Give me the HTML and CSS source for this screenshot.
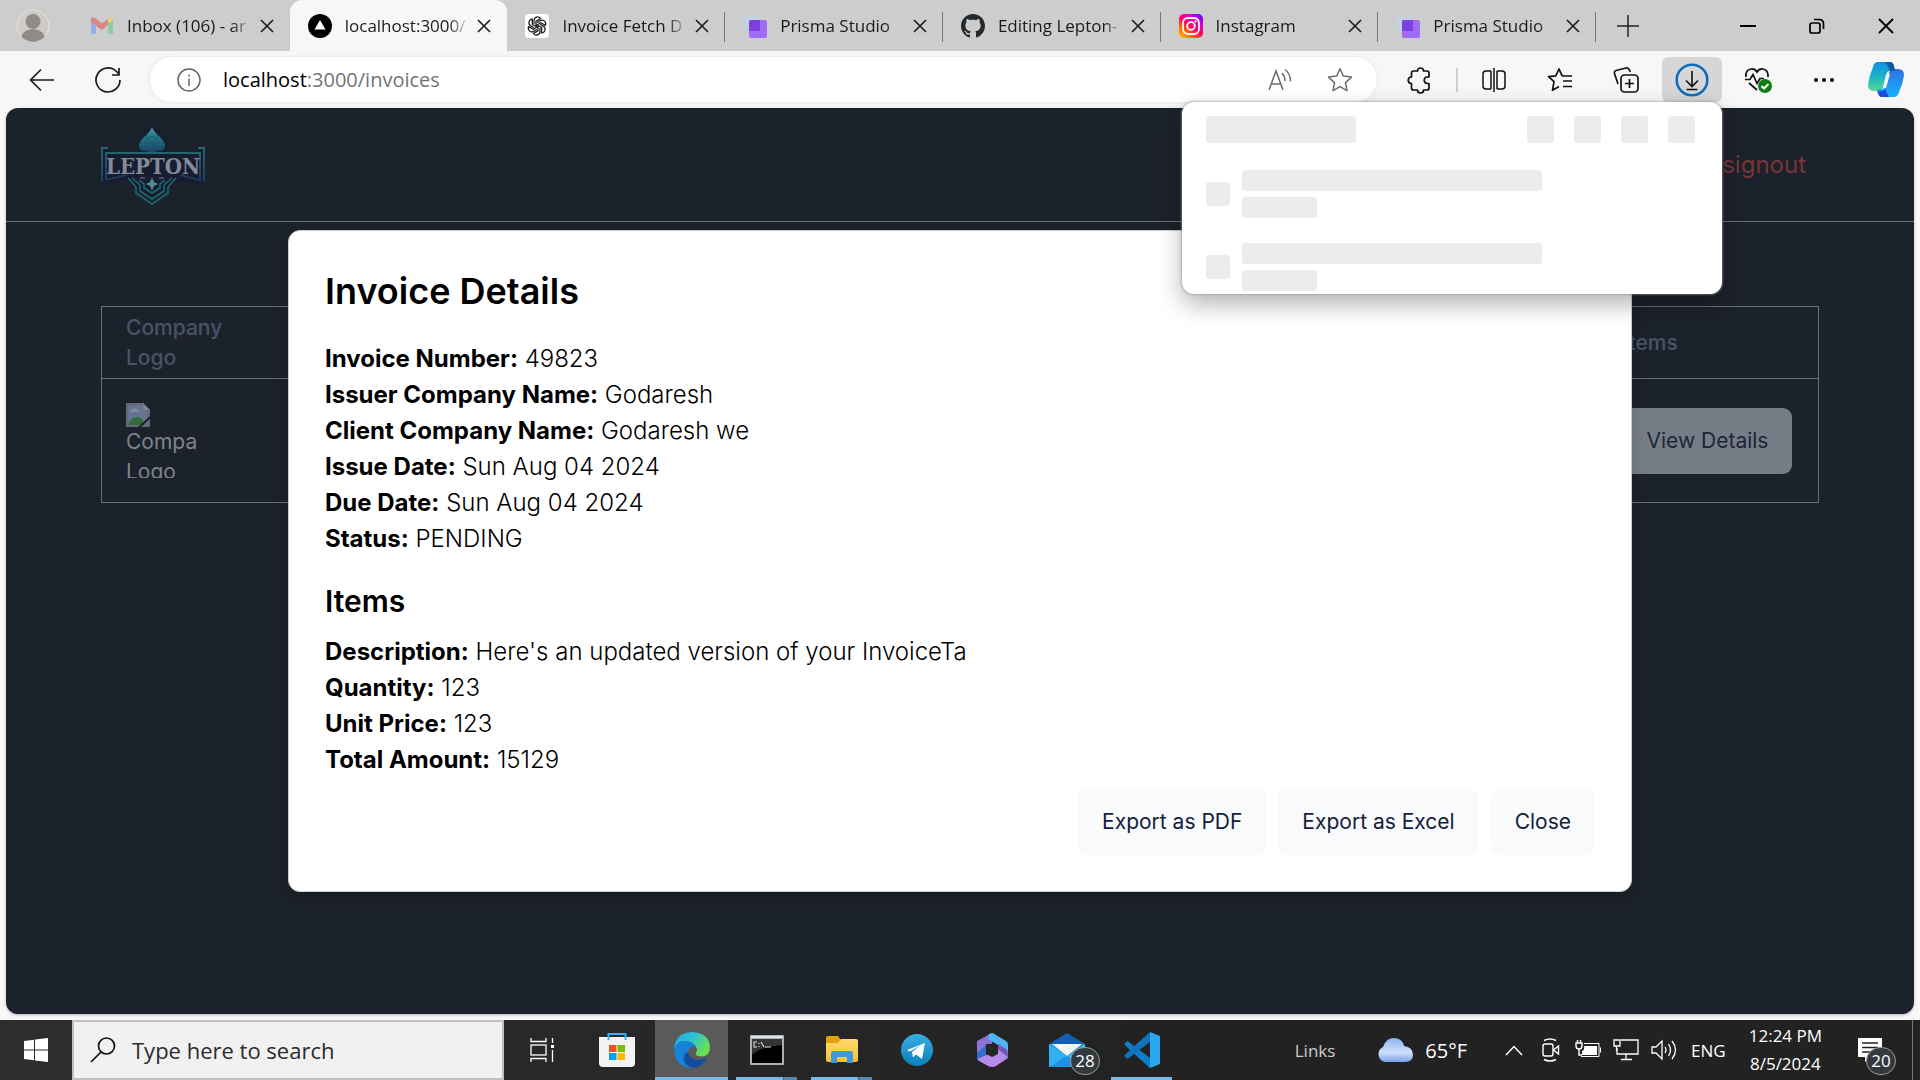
FILE: index.html
```html
<!DOCTYPE html>
<html lang="en">
<head>
<meta charset="utf-8">
<title>Invoices</title>
<link rel="stylesheet" href="styles.css">
</head>
<body>
<svg class="defs" aria-hidden="true">
  <defs>
    <linearGradient id="ig" x1="0" y1="1" x2=".8" y2="0"><stop offset="0" stop-color="#ffc800"/><stop offset=".3" stop-color="#ff6a00"/><stop offset=".55" stop-color="#ff0069"/><stop offset=".8" stop-color="#e000d0"/><stop offset="1" stop-color="#7a00ff"/></linearGradient>
    <linearGradient id="cpA" x1="0" y1="0" x2="0" y2="1"><stop offset="0" stop-color="#0f8fe0"/><stop offset=".5" stop-color="#19b3c9"/><stop offset="1" stop-color="#5bd98a"/></linearGradient>
    <linearGradient id="cpB" x1="0" y1="0" x2="0" y2="1"><stop offset="0" stop-color="#2f6fe0"/><stop offset="1" stop-color="#14b4ff"/></linearGradient>
    <linearGradient id="edA" x1="0" y1="0" x2="1" y2=".5"><stop offset="0" stop-color="#1fa5e6"/><stop offset=".5" stop-color="#2cc3d5"/><stop offset="1" stop-color="#6be04f"/></linearGradient>
    <linearGradient id="cloud" x1="0" y1="0" x2="0" y2="1"><stop offset="0" stop-color="#8fb2ee"/><stop offset=".6" stop-color="#cfe0fb"/><stop offset="1" stop-color="#7aa0e8"/></linearGradient>
    <linearGradient id="tg" x1="0" y1="0" x2="0" y2="1"><stop offset="0" stop-color="#37aee2"/><stop offset="1" stop-color="#0c7fbd"/></linearGradient>
    <linearGradient id="spade" x1="0" y1="0" x2="0" y2="1"><stop offset="0" stop-color="#5c8e9c"/><stop offset=".4" stop-color="#22757f"/><stop offset="1" stop-color="#1c4468"/></linearGradient>
    <linearGradient id="frame" x1="0" y1="0" x2="0" y2="1"><stop offset="0" stop-color="#23666f"/><stop offset="1" stop-color="#1c3b5c"/></linearGradient>
    <linearGradient id="folder" x1="0" y1="0" x2="0" y2="1"><stop offset="0" stop-color="#ffd970"/><stop offset="1" stop-color="#f8bf33"/></linearGradient>
    <symbol id="x" viewBox="0 0 14 14"><path d="M1 1l12 12M13 1L1 13" stroke="#1a1a1a" stroke-width="1.6" fill="none"/></symbol>
    <symbol id="prisma" viewBox="0 0 24 24"><rect x=".5" y="1" width="16" height="16" rx="1.5" fill="#c4d2e0"/><rect x="6" y="6" width="18" height="18" rx="2" fill="#a06bf5"/><path d="M6 8a2 2 0 0 1 2-2h9v11H6z" fill="#7c3fe0"/></symbol>
  </defs>
</svg>
<div class="window">
  <header class="tabstrip">
    <button class="profile" aria-label="Profile"><svg width="34" height="34" viewBox="0 0 34 34"><circle cx="17" cy="17" r="16" fill="#cfccc8" stroke="#e6e3df"/><circle cx="17" cy="12.500" r="7.500" fill="#8f8b88"/><path d="M5.500 28C7 17.500 27 17.500 28.500 28A16 16 0 0 1 5.500 28z" fill="#8f8b88"/></svg></button>
    <nav class="tabs" aria-label="Tabs">
      <div class="tab"><svg class="fav" viewBox="0 0 24 24"><path d="M1 20V5l5 4v11z" fill="#8fb0ee"/><path d="M18 20V9l5-4v15z" fill="#8fcb9f"/><path d="M18 5l3-2q2 0 2 3l-5 4z" fill="#ecd080"/><path d="M1 5q1-3 4-1l7 5.500L18 5v6l-6 5-11-8z" fill="#dd8580"/></svg><span class="title">Inbox (106) - ar</span><button class="x" aria-label="Close tab"><svg width="14" height="14"><use href="#x"/></svg></button></div>
      <div class="tab active"><svg class="fav" viewBox="0 0 24 24"><circle cx="12" cy="12" r="12"/><path d="M12 6l5.500 9.500h-11z" fill="#fff"/></svg><span class="title">localhost:3000/</span><button class="x" aria-label="Close tab"><svg width="14" height="14"><use href="#x"/></svg></button></div>
      <div class="tab"><svg class="fav" viewBox="0 0 24 24"><rect width="24" height="24" rx="4" fill="#fff"/><g fill="none" stroke="#222" stroke-width="1.300"><path id="k" d="M9 10.200V6.500a3.600 3.600 0 0 1 6.600-2l-4.600 2.700v5.600"/><use href="#k" transform="rotate(60 12 12)"/><use href="#k" transform="rotate(120 12 12)"/><use href="#k" transform="rotate(180 12 12)"/><use href="#k" transform="rotate(240 12 12)"/><use href="#k" transform="rotate(300 12 12)"/></g></svg><span class="title">Invoice Fetch D</span><button class="x" aria-label="Close tab"><svg width="14" height="14"><use href="#x"/></svg></button></div>
      <div class="tab"><svg class="fav"><use href="#prisma"/></svg><span class="title">Prisma Studio</span><button class="x" aria-label="Close tab"><svg width="14" height="14"><use href="#x"/></svg></button></div>
      <div class="tab"><svg class="fav" viewBox="0 0 16 16"><path fill="#24292f" d="M8 0C3.580 0 0 3.580 0 8c0 3.540 2.290 6.530 5.470 7.590.4.070.55-.17.55-.38 0-.19-.01-.82-.01-1.490-2.010.37-2.530-.49-2.690-.94-.09-.23-.48-.94-.82-1.130-.28-.15-.68-.52-.01-.53.63-.01 1.080.58 1.230.82.72 1.210 1.870.87 2.330.66.070-.52.28-.87.51-1.070-1.780-.2-3.640-.89-3.640-3.950 0-.87.31-1.590.82-2.150-.08-.2-.36-1.020.08-2.120 0 0 .67-.21 2.200.82.64-.18 1.320-.27 2-.27s1.360.09 2 .27c1.530-1.040 2.200-.82 2.200-.82.44 1.100.16 1.920.08 2.120.51.56.82 1.270.82 2.150 0 3.070-1.870 3.750-3.650 3.950.29.25.54.73.54 1.480 0 1.070-.01 1.930-.01 2.200 0 .21.15.46.55.38A8.010 8.010 0 0 0 16 8c0-4.420-3.580-8-8-8z"/></svg><span class="title">Editing Lepton-</span><button class="x" aria-label="Close tab"><svg width="14" height="14"><use href="#x"/></svg></button></div>
      <div class="tab"><svg class="fav" viewBox="0 0 24 24"><rect width="24" height="24" rx="5" fill="url(#ig)"/><rect x="4" y="4" width="16" height="16" rx="5" fill="none" stroke="#fff" stroke-width="1.800"/><circle cx="12" cy="12" r="3.800" fill="none" stroke="#fff" stroke-width="1.800"/><circle cx="16.600" cy="7.400" r="1.100" fill="#fff"/></svg><span class="title">Instagram</span><button class="x" aria-label="Close tab"><svg width="14" height="14"><use href="#x"/></svg></button></div>
      <div class="tab"><svg class="fav"><use href="#prisma"/></svg><span class="title">Prisma Studio</span><button class="x" aria-label="Close tab"><svg width="14" height="14"><use href="#x"/></svg></button></div>
    </nav>
    <button class="newtab" aria-label="New tab"><svg width="22" height="22" viewBox="0 0 22 22"><path d="M11 0v22M0 11h22" stroke="#222" stroke-width="1.500"/></svg></button>
    <div class="winctl">
      <button aria-label="Minimize"><svg width="16" height="16"><path d="M0 8h16" stroke="#000" stroke-width="2"/></svg></button>
      <button aria-label="Restore"><svg width="16" height="16" viewBox="0 0 16 16" fill="none" stroke="#000" stroke-width="1.700"><rect x="1" y="5" width="10" height="10" rx="2"/><path d="M5 1.500h5q4.500 0 4.500 4.500v5"/></svg></button>
      <button aria-label="Close"><svg width="16" height="16"><path d="M1 1l14 14M15 1L1 15" stroke="#000" stroke-width="1.800"/></svg></button>
    </div>
  </header>

  <div class="toolbar">
    <button class="tool" aria-label="Back"><svg width="26" height="24" viewBox="0 0 26 24" fill="none" stroke="#1a1a1a" stroke-width="1.700"><path d="M25 12H1.500M12 1.500L1.500 12 12 22.500"/></svg></button>
    <button class="tool" aria-label="Refresh"><svg width="26" height="26" viewBox="0 0 26 26" fill="none" stroke="#1a1a1a" stroke-width="1.700"><path d="M25 13A12 12 0 1 1 21.500 4.500L24 7M24 1v7h-7"/></svg></button>
    <div class="address">
      <svg width="24" height="24" viewBox="0 0 24 24" fill="none" stroke="#666" stroke-width="1.500"><circle cx="12" cy="12" r="11"/><path d="M12 10.500V18M12 6.500v2"/></svg>
      <a class="url" href="#"><b>localhost</b>:3000/invoices</a>
      <button class="tool" aria-label="Read aloud"><svg width="24" height="24" viewBox="0 0 24 24" fill="none" stroke="#6d6d6d" stroke-width="1.500"><path d="M1 22L8 3l7 19M3.500 16h9M14 5q3 3 3 8M17 1.500q5.500 4 5.500 12"/></svg></button>
      <button class="tool" aria-label="Add to favorites"><svg width="26" height="26" viewBox="0 0 26 26" fill="none" stroke="#6d6d6d" stroke-width="1.500" stroke-linejoin="round"><path d="M13 1.800l3.400 7.300 8 1-5.900 5.500 1.500 8L13 19.700l-7 3.900 1.500-8L1.600 10.100l8-1z"/></svg></button>
    </div>
    <button class="tool" aria-label="Extensions"><svg width="26" height="28" viewBox="0 0 26 28" fill="none" stroke="#111" stroke-width="1.700" stroke-linejoin="round"><path d="M6.500 5h4a3 3 0 0 1 6 0H20q2 0 2 2v4h-1.500a3 3 0 0 0 0 6.500H22V22q0 2-2 2h-3.500a3 3 0 0 1-6 0h-4q-2 0-2-2v-4.500a3.200 3.200 0 0 1 0-6.500V7q0-2 2-2z"/></svg></button>
    <span class="sep"></span>
    <button class="tool" aria-label="Split screen"><svg width="26" height="26" viewBox="0 0 26 26" fill="none" stroke="#111" stroke-width="1.700"><path d="M10 4H5Q2 4 2 7v12q0 3 3 3h5M16 4h5q3 0 3 3v12q0 3-3 3h-5M10 4v18M16 4v18M13 1v24" stroke-width="1.500"/></svg></button>
    <button class="tool" aria-label="Favorites"><svg width="26" height="26" viewBox="0 0 26 26" fill="none" stroke="#111" stroke-width="1.700" stroke-linejoin="round"><path d="M17 9l-2-.3L12 2 8.800 8.800 1.500 9.700l5.500 5-1.500 8.500L12 19.500M16 9h9M16 14h9M16 19.500h9"/></svg></button>
    <button class="tool" aria-label="Collections"><svg width="26" height="26" viewBox="0 0 26 26" fill="none" stroke="#111" stroke-width="1.700"><rect x="8" y="8" width="17" height="17" rx="3.500"/><path d="M16.500 12v9M12 16.500h9M5 17L1.500 6.500Q1 4 3 3.500l10-2.500q2.500-.5 3.500 2l.7 2"/></svg></button>
    <button class="tool on" aria-label="Downloads"><svg width="34" height="34" viewBox="0 0 34 34" fill="none"><circle cx="17" cy="17" r="15.300" stroke="#0f6cbd" stroke-width="2.600"/><path d="M17 8v15M11 17.500l6 6 6-6M11.500 26.500h11" stroke="#111" stroke-width="1.600"/></svg></button>
    <button class="tool" aria-label="Browser essentials"><svg width="28" height="26" viewBox="0 0 28 26" fill="none" stroke="#111" stroke-width="1.700"><path d="M2 10Q1 3 7 2q4-.5 6 3 2-3.500 6-3 5.500 1 5 8M1 12.500h5l3-5 4 9 3-5h4M5 16l8 7"/><circle cx="21" cy="19" r="7" fill="#107c10" stroke="none"/><path d="M17.500 19l2.500 2.500 4.500-4.500" stroke="#fff" stroke-width="2"/></svg></button>
    <button class="tool" aria-label="More"><svg width="22" height="6"><circle cx="3" cy="3" r="2" /><circle cx="11" cy="3" r="2"/><circle cx="19" cy="3" r="2"/></svg></button>
    <button class="tool cp" aria-label="Copilot"><svg width="36" height="36" viewBox="0 0 36 36"><path d="M10 0h12q3 0 4 4l1 5h-5q-3 0-4 4l-3 12q-1 4-5 4H6q-6 0-6-6 1-9 5-18 1-5 5-5z" fill="url(#cpA)"/><path d="M26 35H14q-3 0-4-4l-1-4h5q3 0 4-4l3-12q1-4 5-4h4q6 0 6 6-1 9-5 17-1 5-5 5z" fill="url(#cpB)"/><path d="M14 0h8q3 0 4 4l1 5h-5l-2-5q-2-4-6-4z" fill="#0b5aa8"/><path d="M21 35h-7q-3 0-4-4l-1-2q7 1 8-2z" fill="#1c4fd8"/><path d="M19 12h3l-4 14h-3z" fill="#f7f7f7"/></svg></button>
  </div>

  <main class="viewport">
    <header class="site">
      <svg class="logo" width="104" height="90" viewBox="0 0 104 90" role="img" aria-label="Lepton">
        <path d="M51 0q2 9 14 20 4 12-4 15H41q-9-5-3-15Q49 9 51 0z" fill="#171d31"/>
        <path d="M51 9q2 5 9 11 5 5 4 9-2 6-9 3l1 2H45l2-2q-7 3-9-3-1-4 4-9 7-6 9-11z" fill="url(#spade)"/>
        <path d="M43 26q4-7 8-8 4 1 8 8M42 29q5-3 9-4 4 1 9 4" stroke="#1c5b78" fill="none"/>
        <path d="M0 29h8v5h88v-5h8v39l-26-6-27 20-27-20L0 68z" fill="#171d31"/>
        <path d="M1 64V30h6M103 64V30h-6" fill="none" stroke="url(#frame)" stroke-width="2"/>
        <path d="M5 62V35h94v27l-20-5M5 62l20-5" fill="none" stroke="url(#frame)" stroke-width="1.800"/>
        <path d="M27 60l8 9v6l16 11 16-11v-6l8-9M31 60l8 7v6l12 8 12-8v-6l8-7M38 62l5 4v4l8 5 8-5v-4l5-4" fill="none" stroke="#1f6970" stroke-width="1.600"/>
        <path d="M51 59l2 5 4 2-4 2-2 5-2-5-4-2 4-2z" fill="#4f8990"/><path d="M39 60h5M58 60h5" stroke="#777d8b"/>
        <text x="52" y="56" text-anchor="middle" class="logotext">LEPTON</text>
      </svg>
      <a class="signout" href="#">signout</a>
    </header>
    <section class="content">
      <table class="invoices">
        <thead><tr><th class="c-logo" scope="col">Company Logo</th><td></td><th class="c-items" scope="col">Items</th></tr></thead>
        <tbody><tr><td><div class="broken" role="img" aria-label="Company Logo"><svg width="24" height="24" viewBox="0 0 24 24"><path d="M0 0h17l7 7v17H0z" fill="#616976"/><path d="M2 2h14v6h6v14H2z" fill="#667494"/><path d="M4 9q0-3 3-3 2-2 4 1 2 0 2 2z" fill="#858b96"/><path d="M2 22q3-8 9-8 5 0 8 8z" fill="#316b3a"/><path d="M12 24L24 13v3l-9 8z" fill="#1c222b"/><path d="M17 0l7 7h-7z" fill="#7e858f"/></svg><span>Compa</span><span>Logo</span></div></td><td></td><td><button class="btn dim">View Details</button></td></tr></tbody>
      </table>
    </section>
    <div class="overlay">
      <div class="modal" role="dialog" aria-labelledby="dlg">
        <h2 id="dlg">Invoice Details</h2>
        <p><strong>Invoice Number:</strong> 49823</p>
        <p><strong>Issuer Company Name:</strong> Godaresh</p>
        <p><strong>Client Company Name:</strong> Godaresh we</p>
        <p><strong>Issue Date:</strong> Sun Aug 04 2024</p>
        <p><strong>Due Date:</strong> Sun Aug 04 2024</p>
        <p><strong>Status:</strong> PENDING</p>
        <h3>Items</h3>
        <p><strong>Description:</strong> Here's an updated version of your InvoiceTa</p>
        <p><strong>Quantity:</strong> 123</p>
        <p><strong>Unit Price:</strong> 123</p>
        <p><strong>Total Amount:</strong> 15129</p>
        <div class="actions"><button class="btn">Export as PDF</button><button class="btn">Export as Excel</button><button class="btn">Close</button></div>
      </div>
    </div>
  </main>

  <aside class="downloads" aria-label="Downloads">
    <div class="dl-head"><i class="sk title-sk"></i><i class="sk sq"></i><i class="sk sq"></i><i class="sk sq"></i><i class="sk sq"></i></div>
    <div class="dl-row"><i class="sk ico"></i><div class="lines"><i class="sk long"></i><i class="sk short"></i></div></div>
    <div class="dl-row"><i class="sk ico"></i><div class="lines"><i class="sk long"></i><i class="sk short"></i></div></div>
  </aside>

  <footer class="taskbar">
    <button class="start" aria-label="Start"><svg width="24" height="24" viewBox="0 0 24 24" fill="#fff"><path d="M0 3l10-1.300v9.800H0zM11 1.500L24 0v11.500H11zM0 12.500h10v9.800L0 21zM11 12.500h13V24l-13-1.500z"/></svg></button>
    <label class="search"><svg width="26" height="26" viewBox="0 0 26 26" fill="none" stroke="#111" stroke-width="1.700"><circle cx="16.500" cy="9" r="8"/><path d="M11 15L1 25"/></svg><input type="text" placeholder="Type here to search" aria-label="Type here to search"></label>
    <nav class="apps" aria-label="Apps">
      <button class="app" aria-label="Task View"><svg width="24" height="24" viewBox="0 0 24 24" fill="none" stroke="#fff" stroke-width="1.300"><path d="M1 0v3.500h15V0M1 24v-3.500h15V24M22.500 0v5M22.500 12v12"/><rect x="1" y="7" width="15" height="10"/><path d="M21 8.500h3" stroke-width="3"/></svg></button>
      <button class="app" aria-label="Store"><svg width="36" height="36" viewBox="0 0 36 36"><path d="M9.500 8V2h17v6" fill="none" stroke="#29b6f6" stroke-width="2"/><path d="M0 5h36v26q0 4-4 4H4q-4 0-4-4z" fill="#f3f3f3"/><path d="M9.500 8V5M26.500 8V5" stroke="#29b6f6" stroke-width="2"/><path fill="#f25022" d="M10 13h7.500v7H10z"/><path fill="#7fba00" d="M18.500 13H26v7h-7.500z"/><path fill="#00a4ef" d="M10 21h7.500v7H10z"/><path fill="#ffb900" d="M18.500 21H26v7h-7.500z"/></svg></button>
      <button class="app current" aria-label="Edge"><svg width="36" height="36" viewBox="0 0 36 36"><path d="M0 17Q1 1 18 0q17 1 18 15 0 9-8 9.500-7 0-6-3.500 2-3 0-6-3-6-11-6Q3 9 0 17z" fill="url(#edA)"/><path d="M0 17Q3 9 11 9q8 0 11 6-6-2-8 5-1 9 7 13l-3 3Q1 36 0 17z" fill="#1583d8"/><path d="M14 19q-3 9 7 14-10 2-12-7 0-5 5-7z" fill="#0f6cc0"/><path d="M14 20q2 8 10 8 5 0 9-3-3 10-14 11-9-2-9-10 1-4 4-6z" fill="#144e9a"/></svg></button>
      <button class="app run stack" aria-label="Command Prompt"><svg width="34" height="30" viewBox="0 0 34 30"><rect width="34" height="30" rx="1" fill="#aab0b8"/><path d="M1 1h32v2H1z" fill="#dfe3e8"/><path d="M2 4h30v24H2z" fill="#000"/><path d="M2 20q8-8 30-10V4H2z" fill="#333"/><g fill="none" stroke="#ddd" stroke-width="1.100"><path d="M7 7H4v5h3M9 8v1M9 11v1M11 7l3 5M15 12h6"/></g></svg></button>
      <button class="app run stack" aria-label="File Explorer"><svg width="32" height="28" viewBox="0 0 32 28"><path d="M0 2q0-2 2-2h10l3 4v6H0z" fill="#e3a008"/><path d="M0 7h12l3-4h15q2 0 2 2v19q0 2-2 2H2q-2 0-2-2z" fill="url(#folder)"/><path d="M5 27V17q0-2 2-2h18q2 0 2 2v10h-6v-6H11v6z" fill="#3f97dd"/></svg></button>
      <button class="app" aria-label="Telegram"><svg width="32" height="32" viewBox="0 0 32 32"><circle cx="16" cy="16" r="16" fill="url(#tg)"/><path d="M6 16l18-7-3 16-6-4.500-3 3-1-5.500 9-7-11 6.500z" fill="#fff"/></svg></button>
      <button class="app" aria-label="Microsoft 365"><svg width="32" height="34" viewBox="0 0 32 34"><path d="M16 0L1 8v18l9-4V11l6 0z" fill="#8d72d8"/><path d="M12 2q4-4 8 0l10 6q2 1 2 4v13L22 19v-7l-9-5z" fill="#4fb4f0"/><path d="M1 26l9-4 12-6 10 9-12 8q-4 2-8 0L3 28z" fill="#b58be8"/><path d="M22 16l10 8q0-6-2-8l-8-5z" fill="#8050b0"/><path d="M1 26l9-4V12L1 20z" fill="#2f6fd0"/><path d="M16 11l6 3v7l-6 3-6-3v-7z" fill="#262626"/></svg></button>
      <button class="app" aria-label="Mail, 28 new"><svg width="36" height="34" viewBox="0 0 36 34"><path d="M0 11L18 0l18 11z" fill="#0f5fb4"/><path d="M0 11h36v23H0z" fill="#1b93e0"/><path d="M3 11h30L18 23z" fill="#f4f4f4"/><path d="M0 11l18 12L0 34z" fill="#32b1f2"/><path d="M36 11v23L18 23z" fill="#39b9f5"/></svg><span class="badge mail">28</span></button>
      <button class="app run" aria-label="Visual Studio Code"><svg width="36" height="36" viewBox="0 0 36 36"><path d="M0 12l3.500-3L26 26v10L7 19z" fill="#0d7fc9"/><path d="M0 24l3.500 3L26 10V0L7 17z" fill="#0f74bd"/><path d="M26 0l10 4v28l-10 4z" fill="#28a8f0"/></svg></button>
    </nav>
    <div class="tray">
      <span class="links">Links</span>
      <svg class="cloud" width="36" height="26" viewBox="0 0 36 26"><path d="M8 25a8 8 0 0 1-2-15Q9 1 17 1t10 8q9 1 9 9 0 6-7 7z" fill="url(#cloud)"/></svg>
      <span class="temp">65°F</span>
      <svg class="chev" width="18" height="11" viewBox="0 0 18 11"><path d="M1 10l8-8.500 8 8.500" fill="none" stroke="#fff" stroke-width="1.500"/></svg>
      <svg width="24" height="24" viewBox="0 0 24 24" fill="none" stroke="#fff" stroke-width="1.400"><rect x="4" y="6" width="10" height="12" rx="2"/><path d="M14.500 12l5-4v8zM5 2.500q6-3 12 0M5 21.500q6 3 12 0"/></svg>
      <svg width="26" height="20" viewBox="0 0 26 20"><path d="M1 3h6v3q0 3-3 3t-3-3zM2.500 0v3M5.500 0v3M4 9v6h3" fill="none" stroke="#fff" stroke-width="1.400"/><path d="M9 6h13v9H7v-4q3-1 2-5z" fill="#fff"/><path d="M9 3.500h15v13H6M25.500 7.500v5" fill="none" stroke="#fff"/></svg>
      <svg width="26" height="22" viewBox="0 0 26 22" fill="none" stroke="#fff" stroke-width="1.300"><path d="M8 1h17v14H4V9M13 15v5M8 20.500h11"/><path d="M1 1h6v6H1zM3.500 7v5"/></svg>
      <svg width="26" height="22" viewBox="0 0 26 22" fill="none" stroke="#fff" stroke-width="1.300"><path d="M1 8h4l6-6v18l-6-6H1zM14 8q2 3 0 6M17.500 5q4 6 0 12M21 2q7 9 0 18"/></svg>
      <span class="lang">ENG</span>
      <div class="clock"><span>12:24 PM</span><span>8/5/2024</span></div>
      <button class="notif" aria-label="Notifications, 20 new"><svg width="24" height="24" viewBox="0 0 24 24"><path d="M0 0h24v19H12l-5 5v-5H0z" fill="#fff"/><path d="M4 5h16M4 9.500h16M4 14h10" stroke="#222" stroke-width="1.300"/></svg><span class="badge">20</span></button>
      <span class="showdesk"></span>
    </div>
  </footer>
</div>
</body>
</html>
```
FILE: styles.css
```css
* { box-sizing: border-box; }
body { margin: 0; font-family: "Open Sans", "Noto Sans", sans-serif; }
button { border: 0; padding: 0; background: none; font: inherit; color: inherit; display: flex; align-items: center; justify-content: center; }
svg { display: block; flex: none; }
.defs { position: absolute; width: 0; height: 0; }
.window { position: relative; display: flex; flex-direction: column; min-height: 100vh; background: #f7f7f7; }

.tabstrip { display: flex; height: 51px; background: #cdcdcd; align-items: stretch; }
.profile { width: 66px; margin-right: 6px; }
.tabs { display: flex; flex: 0 1 1524px; min-width: 0; }
.tab { flex: 1 1 0; min-width: 0; display: flex; align-items: center; padding: 0 16px 0 18px; position: relative; }
.tab.active { background: #f7f7f7; border-radius: 12px 12px 0 0; }
.tab:nth-child(n+3)::after { content: ""; position: absolute; right: 0; top: 12px; height: 30px; width: 1px; background: #777; }
.fav { width: 24px; height: 24px; margin-right: 13px; }
.title { flex: 1; min-width: 0; overflow: hidden; white-space: nowrap; font-size: 17px; line-height: 24px; color: #1a1a1a; -webkit-mask-image: linear-gradient(90deg, #000 84%, transparent); mask-image: linear-gradient(90deg, #000 84%, transparent); }
.x { margin-left: 8px; width: 14px; height: 24px; }
.newtab { width: 64px; }
.winctl { display: flex; margin-left: auto; }
.winctl button { width: 69px; }

.toolbar { display: flex; height: 57px; align-items: center; gap: 6px; padding: 0 8px 0 12px; }
.tool { width: 60px; height: 45px; border-radius: 6px; }
.tool.on { background: #d6d6d6; }
.tool.cp { width: 52px; }
.address { flex: 1; display: flex; align-items: center; height: 45px; border-radius: 23px; background: #fff; padding: 0 7px 0 27px; margin: 0 7px 0 6px; box-shadow: 0 0 4px #e2e2e2; }
.url { flex: 1; margin-left: 22px; font-size: 20px; line-height: 28px; color: #737373; text-decoration: none; }
.url b { font-weight: 400; color: #000; }
.sep { width: 2px; height: 24px; background: #d0d0d0; }

.viewport { position: relative; flex: 1; margin: 0 6px 6px; border-radius: 12px; background: #1c222b; box-shadow: 0 1px 3px #b5b5b5; font-family: Inter, "Open Sans", sans-serif; }
.site { display: flex; align-items: center; justify-content: space-between; height: 114px; padding: 0 108px 0 95px; border-bottom: 1px solid #6a707a; }
.logo { margin-bottom: 4px; }
.logotext { font: 700 22px "DejaVu Serif Condensed", "DejaVu Serif", serif; fill: #858a97; }
.signout { font-size: 24px; line-height: 36px; color: #7d3438; text-decoration: none; }
.content { padding: 84px 95px 0; }
.invoices { width: 100%; border-collapse: collapse; border: 1px solid #6a707a; table-layout: fixed; }
.invoices th, .invoices td { padding: 24px; text-align: left; }
.invoices th { padding: 6px 24px 5px; font-size: 21px; line-height: 30px; font-weight: 500; color: #4a5365; }
.invoices thead td { padding: 0; }
.invoices tbody tr { border-top: 1px solid #6a707a; }
.c-logo { width: 150px; }
.c-items { width: 220px; }
.broken { width: 75px; height: 75px; overflow: hidden; font-size: 21px; line-height: 30px; color: #7f848c; }
.broken span { display: block; }
.btn { height: 66px; padding: 0 24px; border-radius: 9px; background: #f9fafc; color: #14203a; font-size: 21px; line-height: 30px; font-weight: 400; white-space: nowrap; }
.btn.dim { background: #777d87; color: #1c2638; }

.overlay { position: absolute; inset: 0; display: flex; align-items: center; justify-content: center; }
.modal { width: 70vw; padding: 36px; background: #fff; color: #000; border: 1px solid #cbd0d6; border-radius: 12px; box-shadow: 0 8px 16px rgba(0, 0, 0, .15); font-size: 24px; line-height: 36px; }
.modal h2 { margin: 0 0 26px; font-size: 36px; line-height: 48px; font-weight: 600; }
.modal h3 { margin: 23px 0 12px; font-size: 30px; line-height: 42px; font-weight: 600; }
.modal p { margin: 0; font-weight: 300; }
.modal strong { font-weight: 700; }
.actions { display: flex; justify-content: flex-end; gap: 12px; margin-top: 11px; }

.downloads { position: absolute; top: 102px; right: 198px; width: 540px; height: 192px; padding: 14px 27px 0 24px; background: #fff; border-radius: 12px; box-shadow: 0 0 2px 1px rgba(150, 150, 150, .6), 0 10px 24px rgba(0, 0, 0, .3); }
.sk { display: block; background: #ececec; border-radius: 3px; }
.dl-head { display: flex; gap: 20px; margin-bottom: 27px; }
.title-sk { width: 150px; height: 27px; margin-right: auto; }
.sq { width: 27px; height: 27px; }
.dl-row { display: flex; align-items: center; gap: 12px; margin-bottom: 25px; }
.ico { width: 24px; height: 24px; }
.lines { display: grid; gap: 6px; }
.long { width: 300px; height: 21px; }
.short { width: 75px; height: 21px; }

.taskbar { display: flex; height: 60px; background: linear-gradient(90deg, #2e2e2e, #222 60%); color: #fff; }
.start { width: 72px; }
.search { display: flex; align-items: center; width: 432px; padding: 0 16px; background: #f1f1f1; border: 2px solid #c0c0c0; }
.search input { flex: 1; min-width: 0; margin-left: 16px; padding: 0; border: 0; outline: 0; background: none; font: 22px/30px "Open Sans", sans-serif; }
.search input::placeholder { color: #2b2b2b; opacity: 1; }
.apps { display: flex; gap: 2px; padding-left: 1px; }
.app { width: 73px; position: relative; }
.app.current { background: #5a5a5a; }
.app.run::after, .app.current::after { content: ""; position: absolute; left: 6px; right: 6px; bottom: 0; height: 3px; background: #76b9ed; }
.app.current::after { left: 0; right: 0; }
.app.stack::after { background: linear-gradient(90deg, #76b9ed 47px, #3c5c76 47px, #5b88ae 49px); }
.badge { position: absolute; left: 36px; top: 27px; min-width: 30px; height: 28px; border: 1px solid #999; border-radius: 14px; background: #333a3f; font-size: 17px; line-height: 26px; font-weight: 500; text-align: center; color: #fff; }
.badge.mail { left: 40px; }
.tray { display: flex; align-items: center; margin-left: auto; gap: 12px; }
.links { font-size: 17px; color: #ccc; margin-right: 30px; }
.temp { font-size: 20px; margin-right: 26px; }
.chev { margin-right: 4px; }
.lang { font-size: 17px; margin-left: 2px; }
.clock { display: flex; flex-direction: column; align-items: center; margin: 0 12px 0 11px; font-size: 17px; line-height: 28px; white-space: nowrap; }
.notif { position: relative; width: 48px; height: 60px; }
.notif .badge { left: 20px; }
.showdesk { width: 8px; margin-left: 6px; align-self: stretch; border-left: 1px solid #777; }
```
